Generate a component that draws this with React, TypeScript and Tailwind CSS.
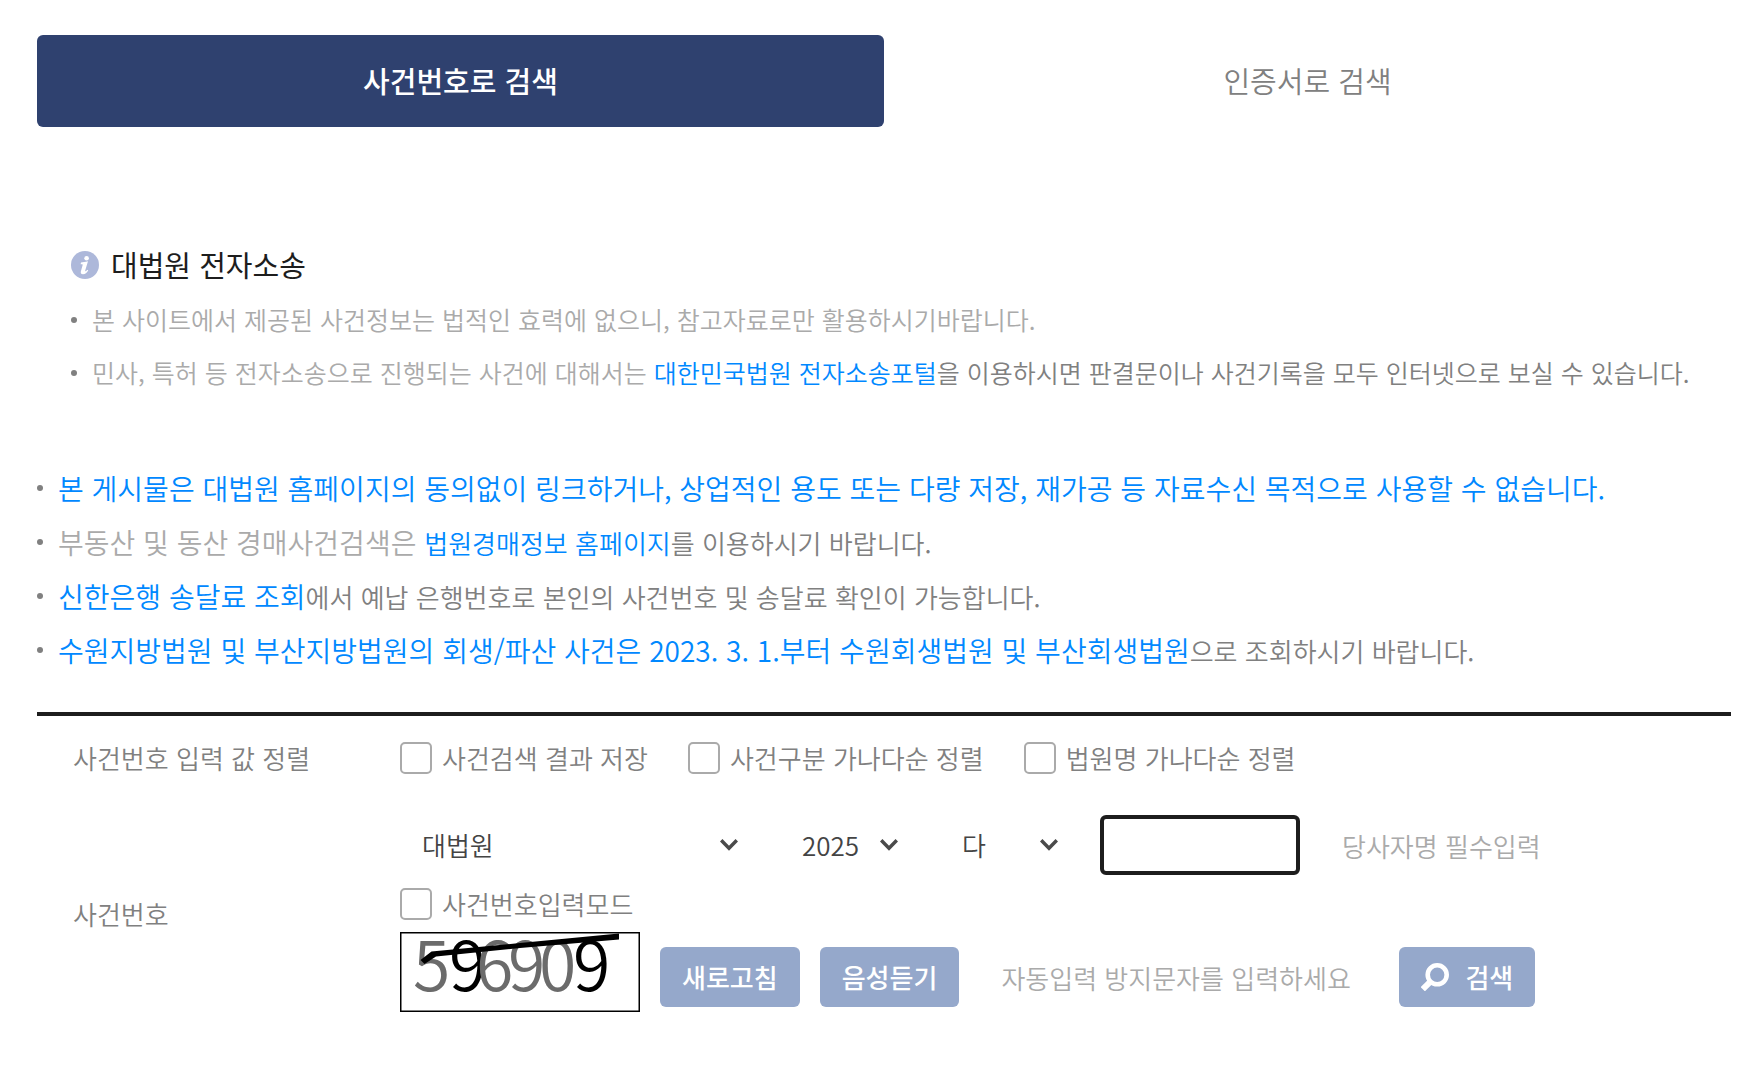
import type { ReactNode } from 'react';

function Bullet() {
  return <span aria-hidden="true" className="size-1.5 shrink-0 rounded-full bg-[#808080]" />;
}

function NoticeLink({ children }: { children: ReactNode }) {
  return (
    <a href="#" className="text-[#0088ff] hover:underline">
      {children}
    </a>
  );
}

function InfoIcon() {
  return (
    <svg viewBox="0 0 28 28" className="size-7 shrink-0" aria-hidden="true">
      <circle cx="14" cy="14" r="14" fill="#adb8da" />
      <circle cx="15.6" cy="7.2" r="2.3" fill="#fff" />
      <path
        d="M10 11.400c2-.1 4-.5 7-1.100l-2.800 9.300c-.2.8.3.9.9.4l1.300-1.200.8.7c-1.300 2.200-3 3.700-5.200 3.700-1.900 0-2.600-1.300-2.100-3l1.700-6c.2-.7 0-1-.7-1h-1.300z"
        fill="#fff"
      />
    </svg>
  );
}

function SearchIcon() {
  return (
    <svg viewBox="0 0 28 28" className="size-7 shrink-0" aria-hidden="true" fill="none" stroke="#fff">
      <circle cx="16.200" cy="11.800" r="9.500" strokeWidth="4.600" />
      <path d="M9.200 18.800L1.800 26.200" strokeWidth="6" />
    </svg>
  );
}

function SelectBox({ label, width, options }: { label: string; width: string; options: string[] }) {
  return (
    <div className={`relative ${width}`}>
      <select
        aria-label={label}
        className="h-15 w-full appearance-none rounded-md bg-white pr-12 pl-[22px] text-[26px] text-[#444]"
      >
        {options.map((option) => (
          <option key={option}>{option}</option>
        ))}
      </select>
      <svg
        viewBox="0 0 18 12"
        aria-hidden="true"
        className="pointer-events-none absolute top-6 right-[22px] h-3 w-[18px]"
        fill="none"
        stroke="#4a4a4a"
        strokeWidth="3.500"
      >
        <path d="M1.200 1.300L9 9.200L16.800 1.300" />
      </svg>
    </div>
  );
}

function CheckOption({ label }: { label: string }) {
  return (
    <label className="flex items-center gap-2.5">
      <input
        type="checkbox"
        className="size-8 shrink-0 appearance-none rounded-[5px] border-2 border-[#aaa] bg-white checked:bg-[#2f416f]"
      />
      {label}
    </label>
  );
}

const captchaDigits = [
  { digit: '5', x: 13, color: '#6b6b6b' },
  { digit: '9', x: 49, color: '#000' },
  { digit: '6', x: 76, color: '#6b6b6b' },
  { digit: '9', x: 108, color: '#6b6b6b' },
  { digit: '0', x: 139, color: '#6b6b6b' },
  { digit: '9', x: 173, color: '#000' },
];

function Captcha() {
  return (
    <svg
      viewBox="0 0 240 80"
      role="img"
      aria-label="자동입력 방지문자"
      className="h-20 w-60 shrink-0 font-[350]"
    >
      <rect x="0.75" y="0.75" width="238.500" height="78.500" fill="#fff" stroke="#000" strokeWidth="1.500" />
      {captchaDigits.map(({ digit, x, color }) => (
        <text key={x} x={x} y="59" fontSize="68" fill={color}>
          {digit}
        </text>
      ))}
      <path d="M20.500 28L31.500 19.500L120 11L219 1.500V7.500L120 16L36 24.500L24.500 32Z" fill="#000" />
    </svg>
  );
}

const actionButton =
  'flex h-15 shrink-0 items-center rounded-md bg-[#95a8cb] px-[22px] text-[26px] font-medium text-white';
const textField =
  'h-15 rounded-md bg-white px-[22px] text-[26px] text-[#444] placeholder:text-[#aaa] outline-none';
const noticeRow = 'flex h-[54px] items-center gap-[15px]';

export default function App() {
  return (
    <main
      lang="ko"
      className="min-h-screen bg-white pt-[35px] pr-[18px] pb-16 pl-[37px] font-['Noto_Sans_CJK_KR','Noto_Sans',sans-serif] font-[350] text-[#808080]"
    >
      <div role="tablist" className="grid h-[92px] grid-cols-2 text-[29px]">
        <button type="button" role="tab" aria-selected="true" className="rounded-md bg-[#2f416f] font-medium text-white">
          사건번호로 검색
        </button>
        <button type="button" role="tab" aria-selected="false" className="rounded-md">
          인증서로 검색
        </button>
      </div>

      <section className="mt-[116px] pl-[34px]">
        <h2 className="flex h-11 items-center gap-3 text-[29px] font-normal text-[#1d1d1d]">
          <InfoIcon />
          대법원 전자소송
        </h2>
        <ul className="mt-[6px] text-[25px] leading-[53px] whitespace-nowrap">
          <li className="flex items-center gap-[15px]">
            <Bullet />
            <p className="text-[#aaa]">
              본 사이트에서 제공된 사건정보는 법적인 효력에 없으니, 참고자료로만 활용하시기바랍니다.
            </p>
          </li>
          <li className="flex items-center gap-[15px]">
            <Bullet />
            <p>
              <span className="text-[#aaa]">민사, 특허 등 전자소송으로 진행되는 사건에 대해서는 </span>
              <NoticeLink>대한민국법원 전자소송포털</NoticeLink>을 이용하시면 판결문이나 사건기록을 모두 인터넷으로 보실
              수 있습니다.
            </p>
          </li>
        </ul>
      </section>

      <ul className="mt-[62px] text-[26px] leading-[54px] whitespace-nowrap">
        <li className={noticeRow}>
          <Bullet />
          <p className="text-[28px]">
            <NoticeLink>
              본 게시물은 대법원 홈페이지의 동의없이 링크하거나, 상업적인 용도 또는 다량 저장, 재가공 등 자료수신 목적으로
              사용할 수 없습니다.
            </NoticeLink>
          </p>
        </li>
        <li className={noticeRow}>
          <Bullet />
          <p>
            <span className="text-[28px] text-[#aaa]">부동산 및 동산 경매사건검색은 </span>
            <NoticeLink>법원경매정보 홈페이지</NoticeLink>를 이용하시기 바랍니다.
          </p>
        </li>
        <li className={noticeRow}>
          <Bullet />
          <p>
            <span className="text-[28px]">
              <NoticeLink>신한은행 송달료 조회</NoticeLink>
            </span>
            에서 예납 은행번호로 본인의 사건번호 및 송달료 확인이 가능합니다.
          </p>
        </li>
        <li className={noticeRow}>
          <Bullet />
          <p>
            <span className="text-[28px]">
              <NoticeLink>
                수원지방법원 및 부산지방법원의 회생/파산 사건은 2023. 3. 1.부터 수원회생법원 및 부산회생법원
              </NoticeLink>
            </span>
            으로 조회하시기 바랍니다.
          </p>
        </li>
      </ul>

      <form
        className="mt-[35px] border-t-4 border-[#1d1d1d] pt-[26px] pl-[36px] text-[26px] leading-8"
        onSubmit={(event) => event.preventDefault()}
      >
        <div role="group" aria-labelledby="sort-options" className="flex items-center">
          <span id="sort-options" className="w-[327px] shrink-0">
            사건번호 입력 값 정렬
          </span>
          <div className="flex gap-10">
            <CheckOption label="사건검색 결과 저장" />
            <CheckOption label="사건구분 가나다순 정렬" />
            <CheckOption label="법원명 가나다순 정렬" />
          </div>
        </div>

        <div className="mt-[41px] flex items-center">
          <label htmlFor="case-number" className="w-[327px] shrink-0">
            사건번호
          </label>
          <div>
            <div className="flex gap-5">
              <SelectBox label="법원" width="w-[360px]" options={['대법원']} />
              <SelectBox label="연도" width="w-[140px]" options={['2025', '2024', '2023']} />
              <SelectBox label="사건구분" width="w-[140px]" options={['다']} />
              <input
                id="case-number"
                type="text"
                className="h-15 w-[200px] rounded-md border-4 border-[#1d1d1d] bg-white px-[18px] text-[26px] outline-none"
              />
              <input
                type="text"
                aria-label="당사자명"
                placeholder="당사자명 필수입력"
                className={`w-[260px] ${textField}`}
              />
            </div>
            <div className="mt-[13px]">
              <CheckOption label="사건번호입력모드" />
            </div>
            <div className="mt-3 flex items-center gap-5">
              <Captcha />
              <div className="flex gap-5 pt-2.5">
                <button type="button" className={actionButton}>
                  새로고침
                </button>
                <button type="button" className={actionButton}>
                  음성듣기
                </button>
                <input
                  type="text"
                  aria-label="자동입력 방지문자"
                  placeholder="자동입력 방지문자를 입력하세요"
                  className={`w-[400px] ${textField}`}
                />
                <button type="submit" className={`${actionButton} gap-4`}>
                  <SearchIcon />
                  검색
                </button>
              </div>
            </div>
          </div>
        </div>
      </form>
    </main>
  );
}
